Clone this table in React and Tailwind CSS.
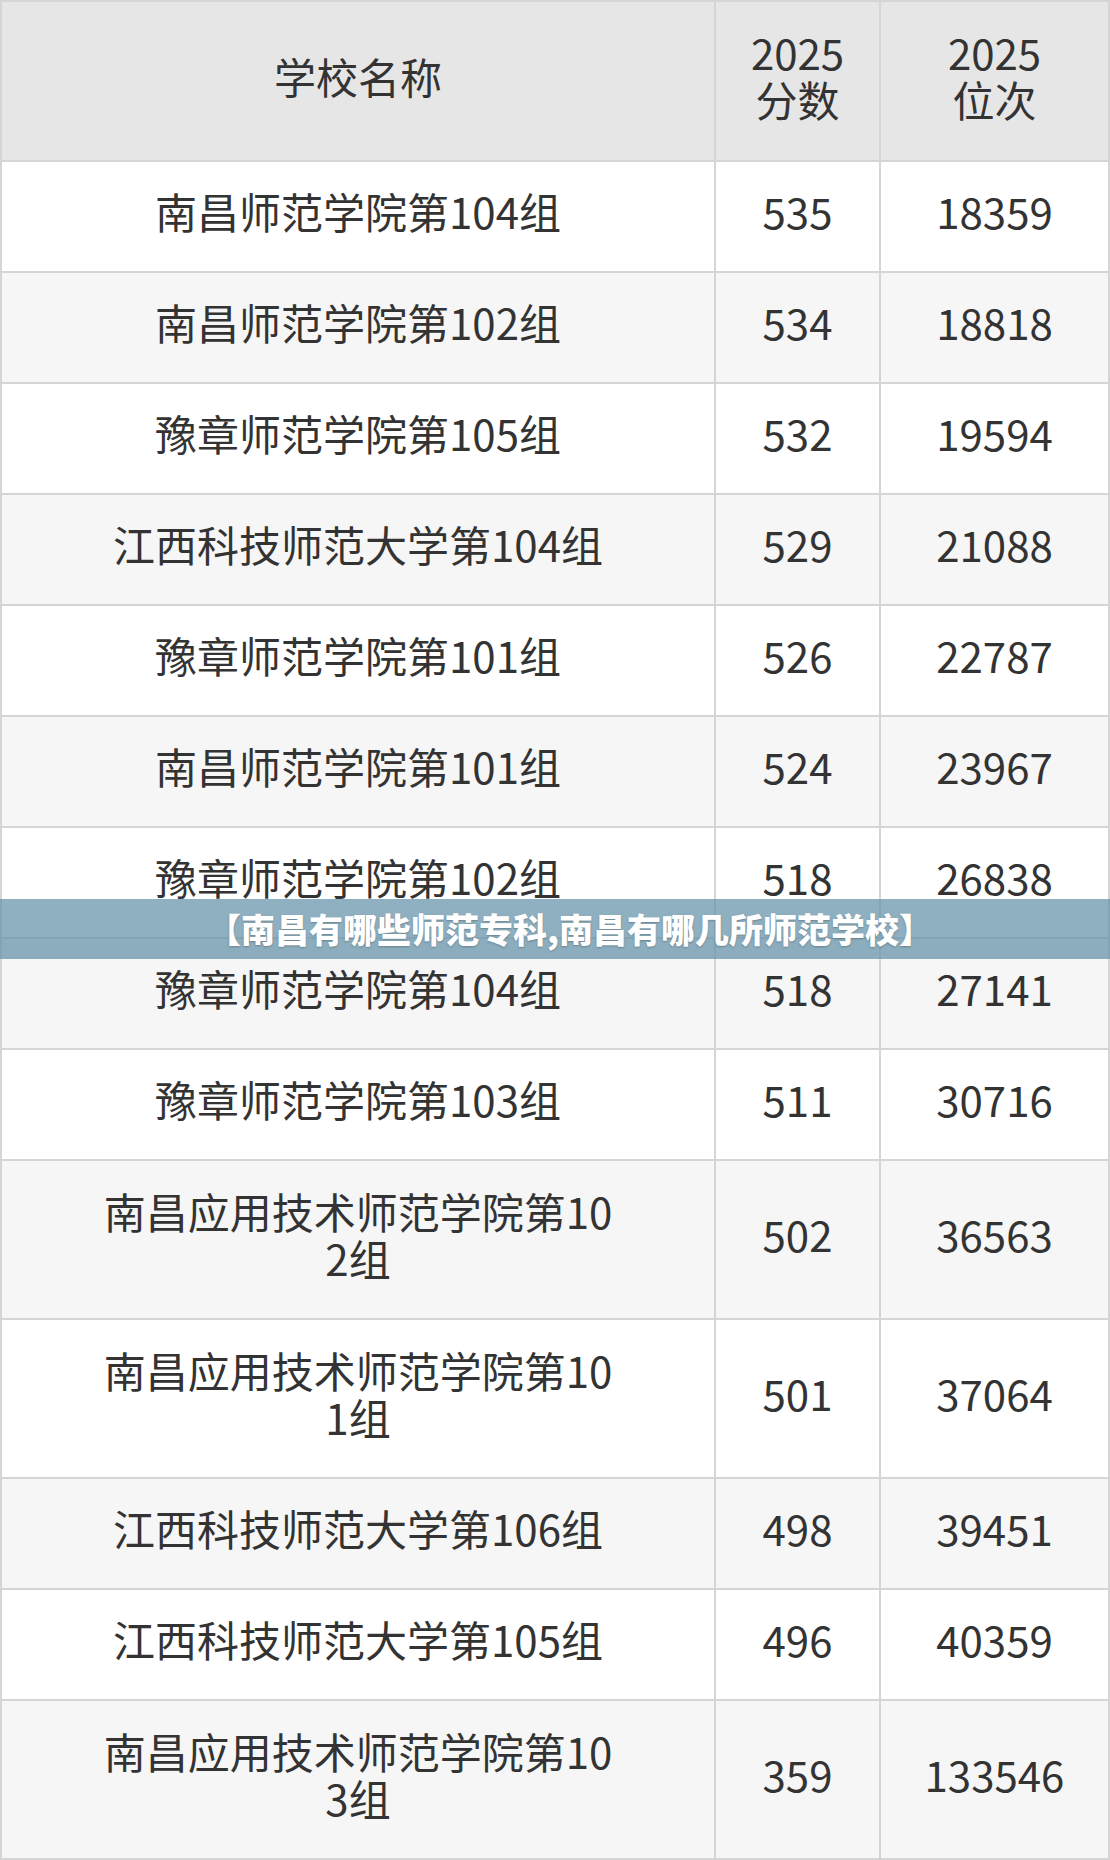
import React from 'react';

const rows = [
  { name: '南昌师范学院第104组', score: '535', rank: '18359' },
  { name: '南昌师范学院第102组', score: '534', rank: '18818' },
  { name: '豫章师范学院第105组', score: '532', rank: '19594' },
  { name: '江西科技师范大学第104组', score: '529', rank: '21088' },
  { name: '豫章师范学院第101组', score: '526', rank: '22787' },
  { name: '南昌师范学院第101组', score: '524', rank: '23967' },
  { name: '豫章师范学院第102组', score: '518', rank: '26838' },
  { name: '豫章师范学院第104组', score: '518', rank: '27141' },
  { name: '豫章师范学院第103组', score: '511', rank: '30716' },
  { name: '南昌应用技术师范学院第102组', score: '502', rank: '36563', tall: true },
  { name: '南昌应用技术师范学院第101组', score: '501', rank: '37064', tall: true },
  { name: '江西科技师范大学第106组', score: '498', rank: '39451' },
  { name: '江西科技师范大学第105组', score: '496', rank: '40359' },
  { name: '南昌应用技术师范学院第103组', score: '359', rank: '133546', tall: true },
];

const font = { fontFamily: '"Noto Sans CJK SC", "Noto Sans", sans-serif' };

export default function App() {
  return (
    <div className="relative w-[1110px] bg-white" style={font}>
      <div className="grid grid-cols-[712px_163px_1fr] gap-[2px] bg-[#d5d5d5] p-[2px] text-[42px] leading-[47px] text-[#333333]">
        {/* header */}
        <div className="h-[158px] bg-[#e6e6e6] flex items-center justify-center pb-[12px]">学校名称</div>
        <div className="h-[158px] bg-[#e6e6e6] flex flex-col items-center justify-center pb-[12px]">
          <span>2025</span>
          <span>分数</span>
        </div>
        <div className="h-[158px] bg-[#e6e6e6] flex flex-col items-center justify-center pb-[12px]">
          <span>2025</span>
          <span>位次</span>
        </div>

        {rows.map((r, i) => {
          const bg = i % 2 === 0 ? 'bg-white' : 'bg-[#f6f6f6]';
          const h = r.tall ? 'h-[157px]' : 'h-[109px]';
          return (
            <React.Fragment key={i}>
              <div className={`${bg} ${h} flex items-center justify-center px-[96px] pb-[12px] text-center break-all`}>
                {r.name}
              </div>
              <div className={`${bg} ${h} flex items-center justify-center pb-[12px]`}>{r.score}</div>
              <div className={`${bg} ${h} flex items-center justify-center pb-[12px]`}>{r.rank}</div>
            </React.Fragment>
          );
        })}
      </div>

      {/* title banner over the table */}
      <div className="absolute left-0 right-0 top-[899px] h-[60px] flex items-center justify-center pl-[30px] bg-[rgba(95,142,165,0.7)]">
        <span className="text-white font-black text-[34px] leading-none [text-shadow:0_1px_2px_rgba(0,0,0,0.25)]">
          【南昌有哪些师范专科,南昌有哪几所师范学校】
        </span>
      </div>
    </div>
  );
}
